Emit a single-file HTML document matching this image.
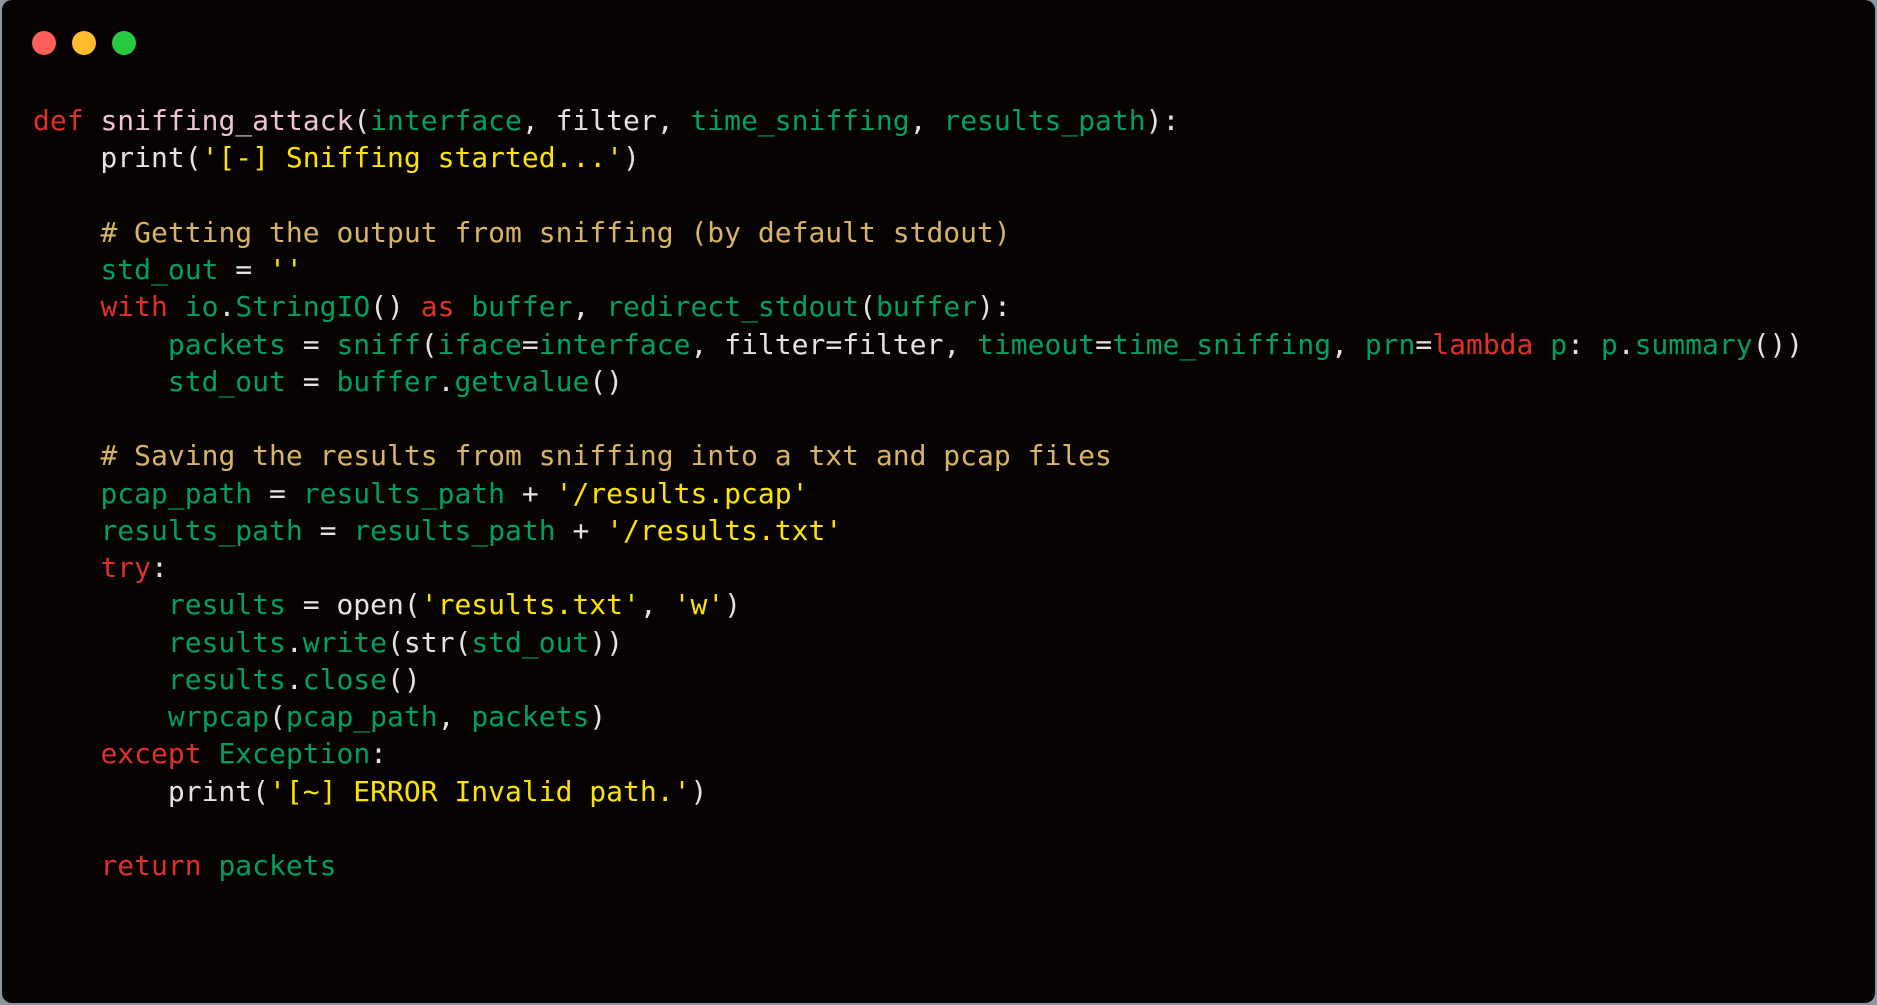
<!DOCTYPE html>
<html><head><style>
html,body{margin:0;padding:0;width:1877px;height:1005px;background:#8b97a1;overflow:hidden}
.win{position:absolute;left:2px;top:0;width:1873px;height:1003px;background:#070303;border-radius:10px}
.dot{position:absolute;top:31px;width:24px;height:24px;border-radius:50%}
pre{position:absolute;left:31px;top:102px;margin:0;font-family:"DejaVu Sans Mono","Liberation Mono",monospace;font-size:28px;line-height:37.25px;color:#e6e2e2}
.k{color:#e0302a}.f{color:#ecc4d6}.g{color:#00a05e}.s{color:#fde400}.c{color:#d8b466}
</style></head><body>
<div class="win">
<div class="dot" style="left:30px;background:#fe5f58"></div>
<div class="dot" style="left:70px;background:#febc2e"></div>
<div class="dot" style="left:110px;background:#28c840"></div>
<pre><span class="k">def</span> <span class="f">sniffing_attack</span>(<span class="g">interface</span>, filter, <span class="g">time_sniffing</span>, <span class="g">results_path</span>):
    print(<span class="s">'[-] Sniffing started...'</span>)

    <span class="c"># Getting the output from sniffing (by default stdout)</span>
    <span class="g">std_out</span> = <span class="s">''</span>
    <span class="k">with</span> <span class="g">io</span>.<span class="g">StringIO</span>() <span class="k">as</span> <span class="g">buffer</span>, <span class="g">redirect_stdout</span>(<span class="g">buffer</span>):
        <span class="g">packets</span> = <span class="g">sniff</span>(<span class="g">iface</span>=<span class="g">interface</span>, filter=filter, <span class="g">timeout</span>=<span class="g">time_sniffing</span>, <span class="g">prn</span>=<span class="k">lambda</span> <span class="g">p</span>: <span class="g">p</span>.<span class="g">summary</span>())
        <span class="g">std_out</span> = <span class="g">buffer</span>.<span class="g">getvalue</span>()

    <span class="c"># Saving the results from sniffing into a txt and pcap files</span>
    <span class="g">pcap_path</span> = <span class="g">results_path</span> + <span class="s">'/results.pcap'</span>
    <span class="g">results_path</span> = <span class="g">results_path</span> + <span class="s">'/results.txt'</span>
    <span class="k">try</span>:
        <span class="g">results</span> = open(<span class="s">'results.txt'</span>, <span class="s">'w'</span>)
        <span class="g">results</span>.<span class="g">write</span>(str(<span class="g">std_out</span>))
        <span class="g">results</span>.<span class="g">close</span>()
        <span class="g">wrpcap</span>(<span class="g">pcap_path</span>, <span class="g">packets</span>)
    <span class="k">except</span> <span class="g">Exception</span>:
        print(<span class="s">'[~] ERROR Invalid path.'</span>)

    <span class="k">return</span> <span class="g">packets</span></pre>
</div>
</body></html>
